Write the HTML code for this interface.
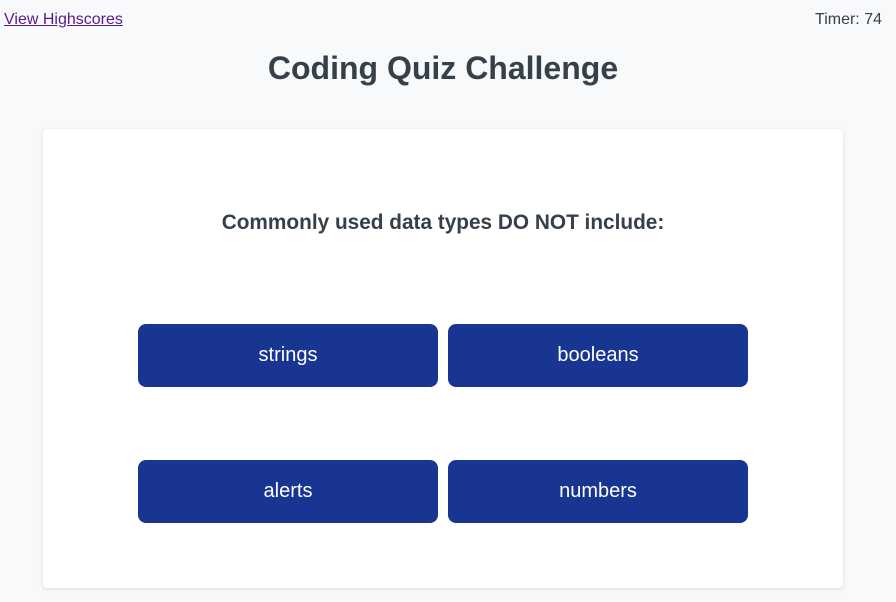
<!DOCTYPE html>
<html><head><style>
body{margin:0;background:#f8f9fb;font-family:"Liberation Sans",sans-serif;color:#36404a;width:896px;height:602px;overflow:hidden;position:relative}
a{position:absolute;left:4px;top:11px;font-size:16px;color:#5a1a8a}
.timer{position:absolute;right:14px;top:11px;font-size:16px}
h1{position:absolute;left:0;width:886px;text-align:center;top:50px;margin:0;font-size:32px;font-weight:bold}
.card{position:absolute;left:43px;top:129px;width:800px;height:459px;background:#fff;border-radius:4px;box-shadow:0 1px 4px rgba(0,0,0,0.12)}
.q{position:absolute;left:0;width:800px;text-align:center;top:82px;font-size:20.8px;font-weight:bold}
.b{position:absolute;width:300px;height:63px;background:#183592;border-radius:8px;color:#fff;font-size:20px;text-align:center;line-height:63px}
</style></head><body>
<a href="#">View Highscores</a><div class="timer">Timer: 74</div>
<h1>Coding Quiz Challenge</h1>
<div class="card"><div class="q">Commonly used data types DO NOT include:</div>
<div class="b" style="left:95px;top:195px">strings</div>
<div class="b" style="left:405px;top:195px">booleans</div>
<div class="b" style="left:95px;top:331px">alerts</div>
<div class="b" style="left:405px;top:331px">numbers</div>
</div>
</body></html>
